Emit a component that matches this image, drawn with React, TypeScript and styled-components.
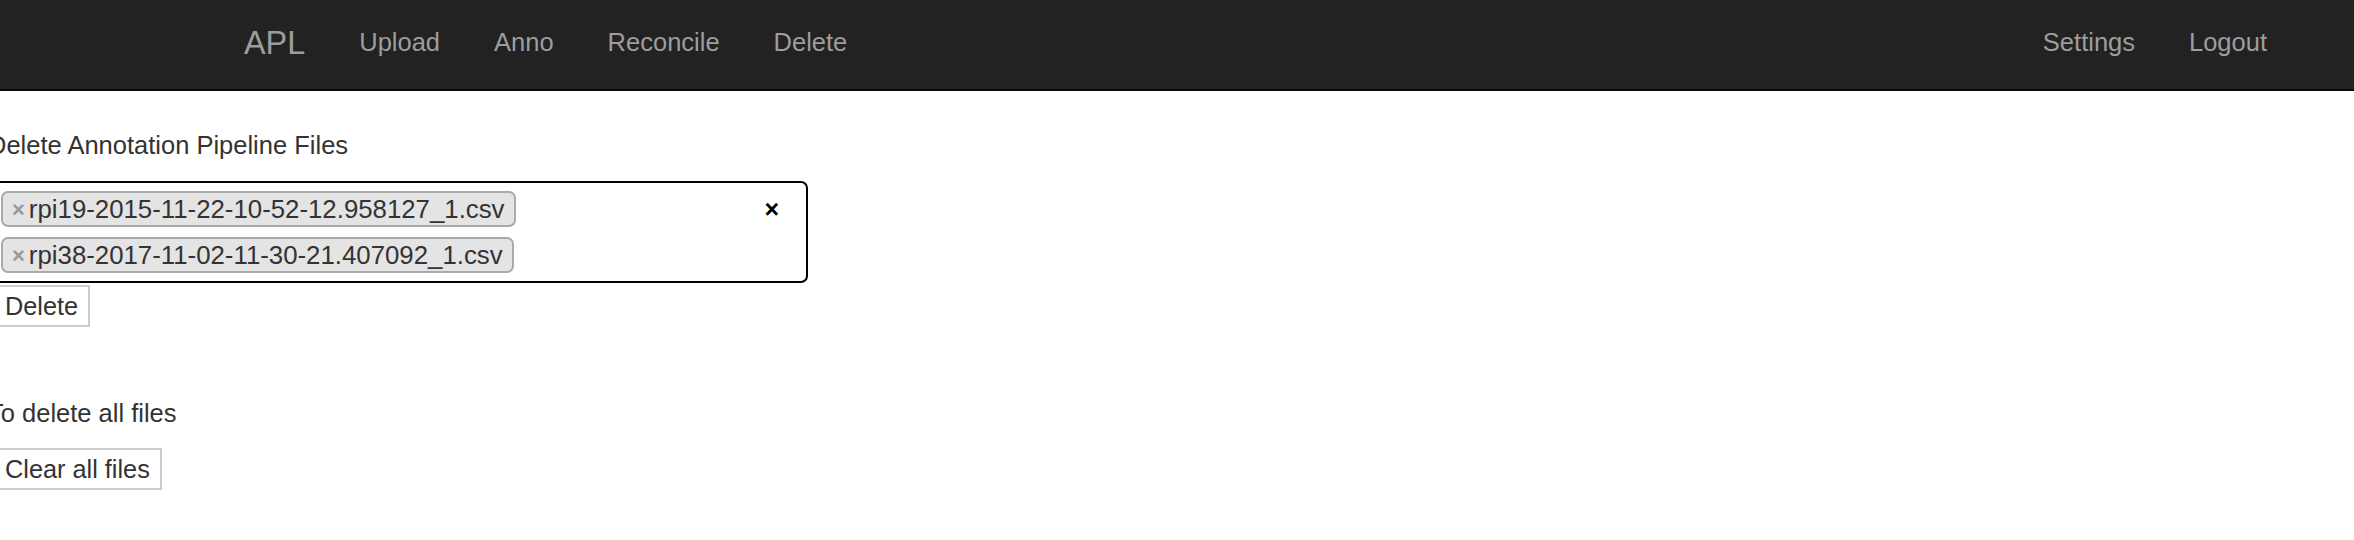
import React from "react";
import styled, { createGlobalStyle } from "styled-components";

const GlobalStyle = createGlobalStyle`
  html, body {
    margin: 0;
    padding: 0;
    background: #ffffff;
  }
  body {
    font-family: "Liberation Sans", Helvetica, Arial, sans-serif;
    font-size: 25.5px;
    line-height: 36px;
    color: #333333;
    overflow: hidden;
  }
  * { box-sizing: border-box; }
`;

const NavBar = styled.nav`
  display: flex;
  align-items: flex-start;
  height: 91px;
  background: #222222;
  border-bottom: 2px solid #080808;
  padding: 0 60px 0 217px;
`;

const Brand = styled.a`
  display: block;
  padding: 25px 27px 29px;
  font-size: 32.4px;
  line-height: 36px;
  color: #9d9d9d;
  text-decoration: none;
`;

const NavList = styled.ul<{ $right?: boolean }>`
  display: flex;
  list-style: none;
  margin: 0;
  margin-left: ${(p) => (p.$right ? "auto" : "0")};
  padding: 0;
`;

const NavLink = styled.a`
  display: block;
  padding: 24px 27px 30px;
  font-size: 25.5px;
  line-height: 36px;
  color: #9d9d9d;
  text-decoration: none;
`;

const Main = styled.main`
  margin-left: -12px;
  padding-top: 36px;
  display: flex;
  flex-direction: column;
  align-items: flex-start;
`;

const Heading = styled.div<{ $gapTop?: number; $gapBottom?: number }>`
  font-size: 25.5px;
  line-height: 36px;
  color: #333333;
  margin-top: ${(p) => p.$gapTop ?? 0}px;
  margin-bottom: ${(p) => p.$gapBottom ?? 0}px;
`;

const SelectBox = styled.div`
  display: flex;
  align-items: flex-start;
  width: 818px;
  margin-left: 2px;
  border: 2px solid #000000;
  border-radius: 7px;
  padding: 0 9px;
  background: #ffffff;
`;

const Choices = styled.ul`
  display: flex;
  flex-direction: column;
  align-items: flex-start;
  gap: 10px;
  list-style: none;
  margin: 0;
  padding: 8px 0;
`;

const Tag = styled.li`
  display: flex;
  align-items: center;
  height: 36px;
  padding: 0 9px;
  background: #e4e4e4;
  border: 2px solid #aaaaaa;
  border-radius: 7px;
  font-size: 25.8px;
  line-height: 32px;
  color: #333333;
`;

const TagRemove = styled.span`
  color: #999999;
  font-weight: bold;
  margin-right: 4px;
  font-size: 22px;
  position: relative;
  top: 1px;
`;

const ClearX = styled.span`
  margin-left: auto;
  margin-top: 8px;
  margin-right: 18px;
  font-weight: bold;
  font-size: 25px;
  line-height: 36px;
  color: #000000;
`;

const Button = styled.button<{ $gapTop?: number }>`
  margin: ${(p) => p.$gapTop ?? 0}px 0 0 5px;
  padding: 0 10px;
  height: 42px;
  border: 2px solid #cccccc;
  background: #ffffff;
  font-family: "Liberation Sans", Helvetica, Arial, sans-serif;
  font-size: 25.3px;
  line-height: 36px;
  color: #333333;
  border-radius: 0;
`;

const navItems = ["Upload", "Anno", "Reconcile", "Delete"];
const rightItems = ["Settings", "Logout"];
const files = [
  "rpi19-2015-11-22-10-52-12.958127_1.csv",
  "rpi38-2017-11-02-11-30-21.407092_1.csv",
];

export default function App() {
  return (
    <>
      <GlobalStyle />
      <NavBar>
        <Brand href="#">APL</Brand>
        <NavList>
          {navItems.map((n) => (
            <li key={n}>
              <NavLink href="#">{n}</NavLink>
            </li>
          ))}
        </NavList>
        <NavList $right>
          {rightItems.map((n) => (
            <li key={n}>
              <NavLink href="#">{n}</NavLink>
            </li>
          ))}
        </NavList>
      </NavBar>
      <Main>
        <Heading $gapBottom={18}>Delete Annotation Pipeline Files</Heading>
        <SelectBox>
          <Choices>
            {files.map((f) => (
              <Tag key={f}>
                <TagRemove>×</TagRemove>
                {f}
              </Tag>
            ))}
          </Choices>
          <ClearX>×</ClearX>
        </SelectBox>
        <Button $gapTop={2}>Delete</Button>
        <Heading $gapTop={68} $gapBottom={17}>
          To delete all files
        </Heading>
        <Button>Clear all files</Button>
      </Main>
    </>
  );
}
